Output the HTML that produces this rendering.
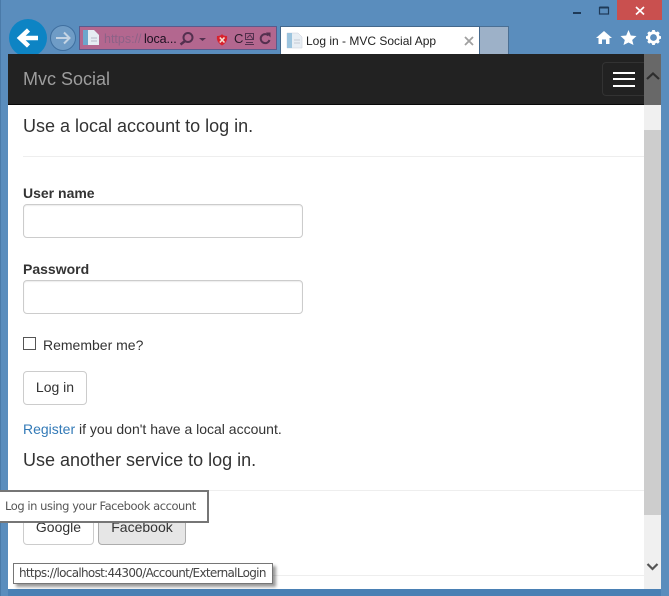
<!DOCTYPE html>
<html lang="en">
<head>
<meta charset="utf-8">
<title>Log in - MVC Social App</title>
<style>
html,body{margin:0;padding:0;}
body{width:669px;height:596px;position:relative;overflow:hidden;background:#5a8dbd;font-family:"Liberation Sans",sans-serif;color:#333;}
.a{position:absolute;box-sizing:border-box;white-space:nowrap;}
.t{font-size:14px;line-height:20px;}
.h{font-size:18px;line-height:20px;}
.b{font-weight:bold;}
.inp{background:#fff;border:1px solid #ccc;border-radius:4px;box-shadow:inset 0 1px 1px rgba(0,0,0,.075);}
.btn{background:#fff;border:1px solid #ccc;border-radius:4px;font-size:14px;text-align:center;color:#333;}
.hr{background:#eee;height:1px;}
svg{position:absolute;left:0;top:0;}
</style>
</head>
<body>
<div class="a" style="left:0;top:0;width:1px;height:596px;background:#4a7aa8"></div>
<div class="a" style="left:8px;top:589px;width:653px;height:7px;background:#4a80b4"></div>

<!-- address bar -->
<div class="a" style="left:79px;top:26px;width:198px;height:24px;background:#b3678f;border:1px solid #5a5a8c"></div>
<div class="a" style="left:104px;top:30px;font-size:12.5px;line-height:18px;color:#8d6287;">https://</div>
<div class="a" style="left:144px;top:30px;font-size:12.5px;line-height:18px;letter-spacing:-.1px;color:#1c1020;">loca...</div>
<div class="a" style="left:234px;top:30px;font-size:13px;line-height:18px;color:#2a1a2a;">C</div>

<!-- tabs -->
<div class="a" style="left:280px;top:26px;width:200px;height:28px;background:#fff;border:1px solid #44688c;border-bottom:0"></div>
<div class="a" style="left:480px;top:26px;width:29px;height:28px;background:#9db1c8;border:1px solid #4a6f94;border-left:0;border-bottom:0"></div>
<div class="a" style="left:306px;top:32px;font-size:12px;line-height:18px;color:#222;">Log in - MVC Social App</div>

<!-- close button -->
<div class="a" style="left:617px;top:0;width:45px;height:20px;background:#c9504f"></div>

<!-- page -->
<div class="a" style="left:8px;top:54px;width:653px;height:535px;background:#fff"></div>
<div class="a" style="left:8px;top:54px;width:636px;height:51px;background:#222;border-bottom:1px solid #080808"></div>
<div class="a" style="left:23px;top:69px;font-size:18px;line-height:20px;color:#9d9d9d;">Mvc Social</div>
<div class="a" style="left:602px;top:62px;width:42px;height:34px;border:1px solid #333;border-right:0;border-radius:4px 0 0 4px"></div>
<div class="a" style="left:613px;top:72px;width:22px;height:2px;background:#fff"></div>
<div class="a" style="left:613px;top:78px;width:22px;height:2px;background:#fff"></div>
<div class="a" style="left:613px;top:85px;width:22px;height:2px;background:#fff"></div>

<!-- scrollbar -->
<div class="a" style="left:644px;top:105px;width:17px;height:484px;background:#f0f0f0"></div>
<div class="a" style="left:644px;top:54px;width:17px;height:51px;background:#686868"></div>
<div class="a" style="left:644px;top:130px;width:17px;height:385px;background:#cdcdcd"></div>

<!-- content -->
<div class="a h" style="left:23px;top:116px;">Use a local account to log in.</div>
<div class="a hr" style="left:23px;top:156px;width:621px;"></div>
<div class="a t b" style="left:23px;top:183px;">User name</div>
<div class="a inp" style="left:23px;top:204px;width:280px;height:34px;"></div>
<div class="a t b" style="left:23px;top:259px;">Password</div>
<div class="a inp" style="left:23px;top:280px;width:280px;height:34px;"></div>
<div class="a" style="left:23px;top:337px;width:13px;height:13px;background:#fff;border:1px solid #555;"></div>
<div class="a t" style="left:43px;top:335px;">Remember me?</div>
<div class="a btn" style="left:23px;top:371px;width:64px;height:34px;line-height:31px;">Log in</div>
<div class="a t" style="left:23px;top:419px;"><span style="color:#337ab7">Register</span> if you don't have a local account.</div>
<div class="a h" style="left:23px;top:450px;">Use another service to log in.</div>
<div class="a hr" style="left:23px;top:490px;width:621px;"></div>
<div class="a btn" style="left:23px;top:511px;width:71px;height:34px;line-height:31px;">Google</div>
<div class="a btn" style="left:98px;top:511px;width:88px;height:34px;line-height:31px;background:#e6e6e6;border-color:#adadad;">Facebook</div>
<div class="a hr" style="left:23px;top:575px;width:621px;"></div>

<!-- tooltip -->
<div class="a" style="left:-2px;top:490px;width:211px;height:33px;background:#fff;border:2px solid #767676;font-size:11.5px;line-height:29px;padding-left:5px;color:#555;font-family:'DejaVu Sans',sans-serif;letter-spacing:-.45px;">Log in using your Facebook account</div>

<!-- status -->
<div class="a" style="left:13px;top:563px;width:260px;height:21px;background:#fff;border:1px solid #767676;box-shadow:3px 3px 3px rgba(0,0,0,.4);font-size:12px;line-height:19px;padding-left:5px;color:#444;font-family:'DejaVu Sans',sans-serif;letter-spacing:-.69px;">https://localhost:44300/Account/ExternalLogin</div>

<!-- icons -->
<svg width="669" height="596" viewBox="0 0 669 596" fill="none">
  <!-- back -->
  <circle cx="28" cy="38" r="19" fill="#0d84c4"/>
  <path d="M38 38H21M28.500 30L20 38L28.500 46" stroke="#fff" stroke-width="4.500"/>
  <rect x="8" y="54" width="40" height="4" fill="#222"/>
  <!-- forward -->
  <circle cx="63" cy="38" r="12.500" fill="#6f9cc6" stroke="#3f6f9f"/>
  <path d="M56 38H69M64 32.500L69.500 38L64 43.500" stroke="#c4d4e4" stroke-width="2"/>
  <!-- address page icon -->
  <path d="M83 30H94L99 35V45H83Z" fill="#e6edf3"/>
  <rect x="83" y="30" width="5" height="15" fill="#6da6cc"/>
  <path d="M91 38H97M91 41H97" stroke="#b5b9c9"/>
  <!-- search -->
  <circle cx="188" cy="37.500" r="4.500" stroke="#54304f" stroke-width="2"/>
  <path d="M185 41L180.500 44.500" stroke="#54304f" stroke-width="2.500"/>
  <path d="M199 38H206L202.500 41Z" fill="#54304f"/>
  <!-- shield -->
  <path d="M217 36Q221 36 222 34Q223 36 227 36Q228 42 222 45.500Q216 42 217 36Z" fill="#d8222e"/>
  <path d="M219.800 37.500L224.500 42.500M224.500 37.500L219.800 42.500" stroke="#f4e0d0" stroke-width="1.600"/>
  <!-- image icon -->
  <rect x="245.500" y="33.500" width="8" height="6" stroke="#54304f"/>
  <path d="M245 44.500H254M246 42.500H253M247 38L250 35L253 39" stroke="#54304f"/>
  <!-- refresh -->
  <path d="M268.500 35.500A4.500 4.500 0 1 0 269.500 40" stroke="#54304f" stroke-width="2"/>
  <path d="M266 32.500H270.500V37.500Z" fill="#54304f"/>
  <!-- tab page icon -->
  <path d="M287 33H298L302 37V48H287Z" fill="#e8eef4" stroke="#c8ccd8" stroke-width=".5"/>
  <rect x="287" y="33" width="5" height="15" fill="#9cc4de"/>
  <path d="M294 40H300M294 43H300" stroke="#c5c9d5"/>
  <!-- tab close -->
  <path d="M465 37L473 45M473 37L465 45" stroke="#a0a0a0" stroke-width="1.800"/>
  <!-- min / max / close -->
  <rect x="573" y="12" width="8" height="2" fill="#1e3a58"/>
  <rect x="599.500" y="7.500" width="9" height="6.500" stroke="#1e3a58" stroke-width="1.200"/>
  <path d="M599.500 7.500H608.500" stroke="#1e3a58" stroke-width="2"/>
  <path d="M636 7L644 14.500M644 7L636 14.500" stroke="#fff" stroke-width="1.700"/>
  <!-- home -->
  <path d="M604 31L612 38H609.500V44H606V39.500H602V44H598.500V38H596Z" fill="#fff"/>
  <!-- star -->
  <path d="M628.500 30L630.800 35.500L636.500 36L632.200 40L633.500 45L628.500 42.500L623.500 45L624.800 40L620.500 36L626.200 35.500Z" fill="#fff"/>
  <!-- gear -->
  <circle cx="653.500" cy="37.500" r="4.800" stroke="#fff" stroke-width="2.800"/>
  <path d="M653.500 30V33M653.500 42V45M646 37.500H649M658 37.500H661M648.200 32.200L650.200 34.200M656.800 40.800L658.800 42.800M658.800 32.200L656.800 34.200M650.200 40.800L648.200 42.800" stroke="#fff" stroke-width="2.800"/>
  <!-- scroll chevrons -->
  <path d="M647 79L653 73.500L659 79" stroke="#2e2e2e" stroke-width="2.200"/>
  <path d="M647.500 564L652.500 569L657.500 564" stroke="#555" stroke-width="2.200"/>
</svg>
</body>
</html>
